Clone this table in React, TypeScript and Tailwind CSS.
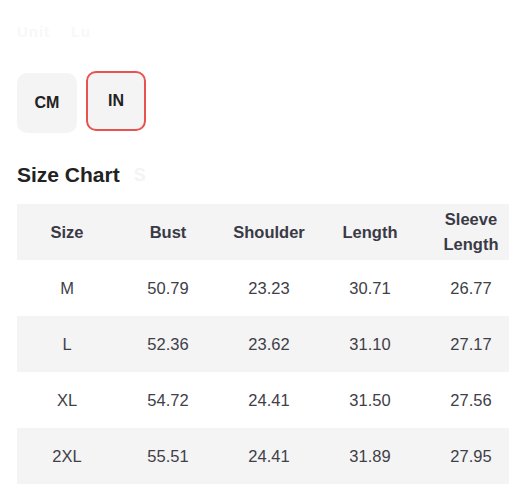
import React from "react";

const rows = [
  ["M", "50.79", "23.23", "30.71", "26.77"],
  ["L", "52.36", "23.62", "31.10", "27.17"],
  ["XL", "54.72", "24.41", "31.50", "27.56"],
  ["2XL", "55.51", "24.41", "31.89", "27.95"],
];

const cols = "grid grid-cols-[100px_102px_100px_102px_88px]";

export default function App() {
  return (
    <div
      className="w-[526px] h-[498px] bg-white pl-[17px] overflow-hidden"
      style={{ fontFamily: '"Liberation Sans", Arial, sans-serif' }}
    >
      <div className="pt-[21px] h-[71px] text-[15px] font-bold text-[#f8f8f8] tracking-[1px]">
        Unit &nbsp;&nbsp; Lu
      </div>
      <div className="flex items-start gap-[9px]">
        <div className="mt-[2px] w-[60px] h-[60px] rounded-[10px] bg-[#f4f4f4] flex items-center justify-center text-[16px] font-bold text-[#222]">
          CM
        </div>
        <div className="w-[60px] h-[60px] rounded-[10px] bg-[#f4f4f4] border-2 border-[#e8524f] flex items-center justify-center text-[16px] font-bold text-[#222]">
          IN
        </div>
      </div>
      <div className="mt-[29px] flex items-center h-[26px]">
        <span className="text-[21px] font-bold text-[#222]">Size Chart</span>
        <span className="ml-[14px] text-[18px] font-bold text-[#f4f4f4]">S</span>
      </div>
      <div className="mt-[16px] w-[492px] text-[16.5px]">
        <div className={`${cols} h-[56px] bg-[#f4f4f4] font-bold text-[#3a3a46] items-center text-center`}>
          <div>Size</div>
          <div>Bust</div>
          <div>Shoulder</div>
          <div>Length</div>
          <div className="pl-[12px] leading-[25px]">
            Sleeve
            <br />
            Length
          </div>
        </div>
        {rows.map((r, i) => (
          <div
            key={r[0]}
            className={`${cols} h-[56px] items-center text-center text-[#404048] ${
              i % 2 === 1 ? "bg-[#f4f4f4]" : "bg-white"
            }`}
          >
            {r.map((c, j) => (
              <div key={j} className={j === 4 ? "pl-[12px]" : ""}>
                {c}
              </div>
            ))}
          </div>
        ))}
      </div>
    </div>
  );
}
